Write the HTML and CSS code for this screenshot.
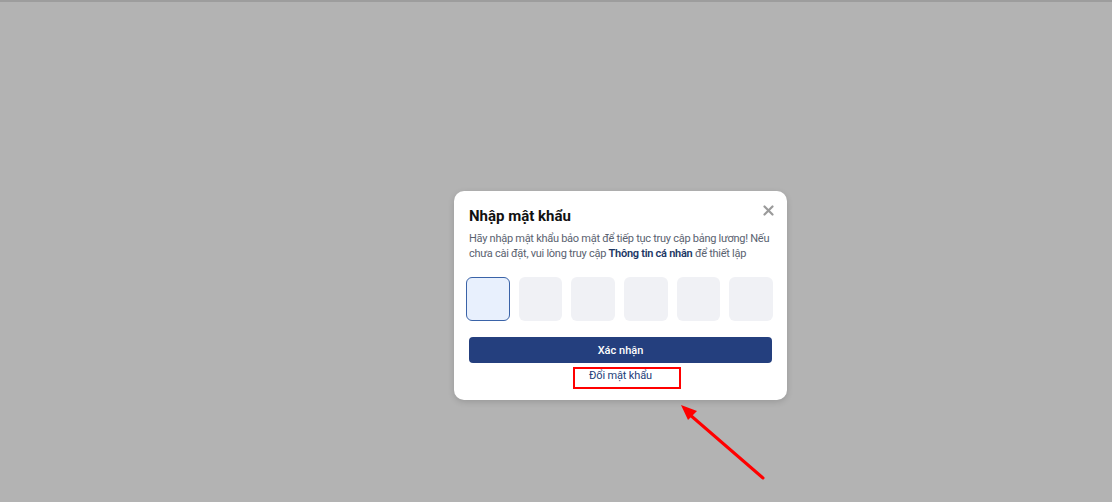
FILE: index.html
```html
<!DOCTYPE html>
<html>
	<head>
		<meta charset="UTF-8">
		<title>Nhập mật khẩu</title>
		<link rel="stylesheet" href="styles.css">
	</head>
	<body>
		<div class="overlay">
			<div class="modal">
				<span class="close">
					<svg width="11" height="11" viewBox="0 0 11 11"><path d="M1.5 1.5L9.5 9.5M9.5 1.5L1.5 9.5" stroke="#9a9a9a" stroke-width="2.2" stroke-linecap="round"/></svg>
				</span>
				<h2 class="title">Nhập mật khẩu</h2>
				<p class="desc">Hãy nhập mật khẩu bảo mật để tiếp tục truy cập bảng lương! Nếu chưa cài đặt, vui lòng truy cập <b>Thông tin cá nhân</b> để thiết lập</p>
				<div class="pins">
					<div class="pin active"></div>
					<div class="pin"></div>
					<div class="pin"></div>
					<div class="pin"></div>
					<div class="pin"></div>
					<div class="pin"></div>
				</div>
				<button class="btn">Xác nhận</button>
				<a class="link">Đổi mật khẩu</a>
			</div>
		</div>
		<!-- chú thích -->
		<div class="mark"></div>
		<svg class="arrow" width="100" height="90" viewBox="0 0 100 90">
			<path d="M88 79L14 15" stroke="#ff0000" stroke-width="3" stroke-linecap="round"/>
			<path d="M6 6L22 12L13 21Z" fill="#ff0000"/>
		</svg>
	</body>
</html>
```

FILE: styles.css
```css
* {
	box-sizing: border-box;
}

body {
	margin: 0;
	background-color: #b3b3b3;
	font-family: Roboto, "Liberation Sans", sans-serif;
}

.overlay {
	height: 502px;
	border-top: 2px solid #9d9d9d;
	padding-top: 189px;
	padding-left: 454px;
}

.modal {
	position: relative;
	width: 333px;
	height: 209px;
	padding: 15px 15px 0 15px;
	background-color: #fff;
	border-radius: 10px;
	box-shadow: 0 2px 6px rgba(0, 0, 0, 0.15);
}

.close {
	position: absolute;
	top: 14px;
	right: 13px;
	width: 11px;
	height: 11px;
	line-height: 0;
}

.title {
	margin: 0;
	font-size: 15px;
	line-height: 20px;
	font-weight: 700;
	color: #111;
}

.desc {
	margin: 5px -8px 0 0;
	font-size: 11px;
	line-height: 15px;
	letter-spacing: -0.27px;
	color: #5a6270;
}

.desc b {
	font-weight: 600;
	color: #1c3765;
}

.pins {
	display: grid;
	grid-template-columns: repeat(6, 1fr);
	gap: 9px;
	margin: 16px -1px 0 -3px;
}

.pin {
	height: 44px;
	background-color: #f0f1f5;
	border-radius: 6px;
}

.pin.active {
	background-color: #e8f0fd;
	border: 1px solid #3a63a8;
}

.btn {
	display: block;
	width: 100%;
	height: 26px;
	margin-top: 16px;
	border: 0;
	border-radius: 4px;
	background-color: #243f7e;
	color: #fff;
	font-family: inherit;
	font-size: 11px;
	font-weight: 500;
}

.link {
	display: block;
	margin-top: 5px;
	text-align: center;
	font-size: 11px;
	letter-spacing: -0.15px;
	line-height: 16px;
	color: #24407a;
}

.mark {
	position: absolute;
	left: 573px;
	top: 367px;
	width: 108px;
	height: 22px;
	border: 2px solid #ff0000;
}

.arrow {
	position: absolute;
	left: 675px;
	top: 399px;
}
```
